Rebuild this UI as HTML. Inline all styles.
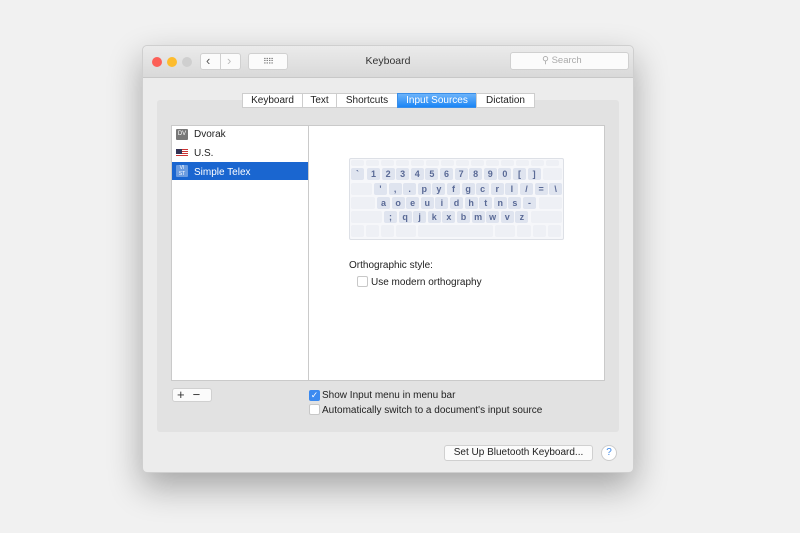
<!DOCTYPE html>
<html><head><meta charset="utf-8"><style>
*{box-sizing:border-box;margin:0;padding:0}
body{width:800px;height:533px;background:#f1f1f1;font-family:"Liberation Sans",sans-serif;font-size:10px;color:#222;position:relative;overflow:hidden}
.a{position:absolute}
.win{left:142px;top:45px;width:492px;height:428px;background:#ececec;border:1px solid #cfcfcf;border-radius:5px;box-shadow:0 14px 34px rgba(0,0,0,.32)}
.tb{left:0;top:0;width:490px;height:32px;background:linear-gradient(#ebebeb,#d9d9d9);border-bottom:1px solid #c8c8c8;border-radius:5px 5px 0 0}
.dot{width:10px;height:10px;border-radius:50%;top:11px}
.btn{background:#fbfbfb;border:1px solid #d0d0d0;border-radius:3px}
.tab{top:93px;height:15px;line-height:14px;text-align:center;background:#fff;border:1px solid #cdcdcd;font-size:10px}
.key{width:13px;height:12px;background:#dfe4ef;border-radius:2px;color:#5a6a96;font-weight:bold;font-size:9px;text-align:center;line-height:12px}
.ek{height:12px;background:#eef0f5;border-radius:2px}
.cb{width:11px;height:11px;border:1px solid #c8c8c8;background:#fff;border-radius:2px}
</style></head><body>
<div class="a win">
 <div class="a tb"></div>
 <div class="a dot" style="left:9px;background:#fc5f57"></div>
 <div class="a dot" style="left:24px;background:#fdbc2e"></div>
 <div class="a dot" style="left:39px;background:#cfcfcf"></div>
 <div class="a btn" style="left:57px;top:7px;width:41px;height:17px"></div>
 <div class="a" style="left:77px;top:7px;width:1px;height:17px;background:#d0d0d0"></div>
 <div class="a" style="left:63px;top:7px;font-size:13px;color:#555">‹</div>
 <div class="a" style="left:84px;top:7px;font-size:13px;color:#bbb">›</div>
 <div class="a btn" style="left:105px;top:7px;width:40px;height:17px;text-align:center;font-size:8px;line-height:15px;color:#666;letter-spacing:-1px">⠿⠿</div>
 <div class="a" style="left:0;top:9px;width:490px;text-align:center;font-size:10.5px;color:#333">Keyboard</div>
 <div class="a btn" style="left:367px;top:6px;width:119px;height:18px;color:#aaa;font-size:9.5px;line-height:16px;padding-left:31px">⚲ Search</div>
</div>
<div class="a" style="left:157px;top:100px;width:462px;height:332px;background:#e2e2e2;border-radius:3px"></div>
<div class="a tab" style="left:242px;width:61px">Keyboard</div>
<div class="a tab" style="left:302px;width:35px">Text</div>
<div class="a tab" style="left:336px;width:62px">Shortcuts</div>
<div class="a tab" style="left:397px;width:80px;background:linear-gradient(#6cb3fa,#1b85f5);color:#fff;border-color:#3a8ee8">Input Sources</div>
<div class="a tab" style="left:476px;width:59px">Dictation</div>
<div class="a" style="left:171px;top:125px;width:434px;height:256px;background:#fff;border:1px solid #cacaca"></div>
<div class="a" style="left:308px;top:125px;width:1px;height:256px;background:#cacaca"></div>
<div class="a" style="left:176px;top:129px;width:12px;height:11px;background:#777;color:#fff;font-size:6px;text-align:center;line-height:11px;border-radius:1px">DV</div>
<div class="a" style="left:194px;top:129px">Dvorak</div>
<div class="a" style="left:176px;top:149px;width:12px;height:8px;background:repeating-linear-gradient(#c33 0 1px,#fff 1px 2px)"><div style="width:6px;height:5px;background:#335"></div></div>
<div class="a" style="left:194px;top:148px">U.S.</div>
<div class="a" style="left:172px;top:162px;width:136px;height:18px;background:#1a66d0"></div>
<div class="a" style="left:176px;top:165px;width:12px;height:12px;background:#6b9ce0;color:#fff;font-size:5px;line-height:6px;text-align:center;border-radius:1px">VI<br>ST</div>
<div class="a" style="left:194px;top:167px;color:#fff">Simple Telex</div>
<div class="a" style="left:349px;top:158px;width:215px;height:82px;background:#f6f7fa;border:1px solid #dde0e6;border-radius:2px"></div>
<div id="kb"></div>
<div class="a" style="left:349px;top:260px;font-size:10px">Orthographic style:</div>
<div class="a cb" style="left:357px;top:276px"></div>
<div class="a" style="left:371px;top:277px">Use modern orthography</div>
<div class="a btn" style="left:172px;top:388px;width:40px;height:14px;font-size:13px;line-height:12px;color:#333"><span style="margin-left:4px">+</span><span style="margin-left:8px">−</span></div>
<div class="a" style="left:309px;top:390px;width:11px;height:11px;background:#3b8af0;border-radius:2px;color:#fff;font-size:9px;line-height:11px;text-align:center">✓</div>
<div class="a" style="left:322px;top:390px">Show Input menu in menu bar</div>
<div class="a cb" style="left:309px;top:404px"></div>
<div class="a" style="left:322px;top:405px">Automatically switch to a document's input source</div>
<div class="a btn" style="left:444px;top:445px;width:149px;height:16px;text-align:center;line-height:14px">Set Up Bluetooth Keyboard...</div>
<div class="a" style="left:601px;top:445px;width:16px;height:16px;border-radius:50%;background:#fff;border:1px solid #ccc;color:#3a86e8;text-align:center;line-height:14px;font-size:10px">?</div>
<script>
var kb=document.getElementById('kb'),h='';
function k(x,y,t){h+='<div class="a key" style="left:'+x+'px;top:'+y+'px">'+t+'</div>';}
function e(x,y,w){h+='<div class="a ek" style="left:'+x+'px;top:'+y+'px;width:'+w+'px;height:'+(y<165?6:12)+'px"></div>';}
for(var i=0;i<14;i++)e(351+i*15,160,13);
k(351,168,'`');"1234567890[]".split('').forEach(function(c,i){k(367+i*14.6,168,c)});e(543,168,19);
e(351,183,21);"',.pyfgcrl/=\\".split('').forEach(function(c,i){k(374+i*14.6,183,c)});
e(351,197,24);"aoeuidhtns-".split('').forEach(function(c,i){k(377+i*14.6,197,c)});e(539,197,23);
e(351,211,31);";qjkxbmwvz".split('').forEach(function(c,i){k(384+i*14.6,211,c)});e(531,211,31);
[[351,13],[366,13],[381,13],[396,20],[418,75],[495,20],[517,14],[533,13],[548,13]].forEach(function(a){e(a[0],225,a[1])});
kb.innerHTML=h;
</script>
</body></html>
